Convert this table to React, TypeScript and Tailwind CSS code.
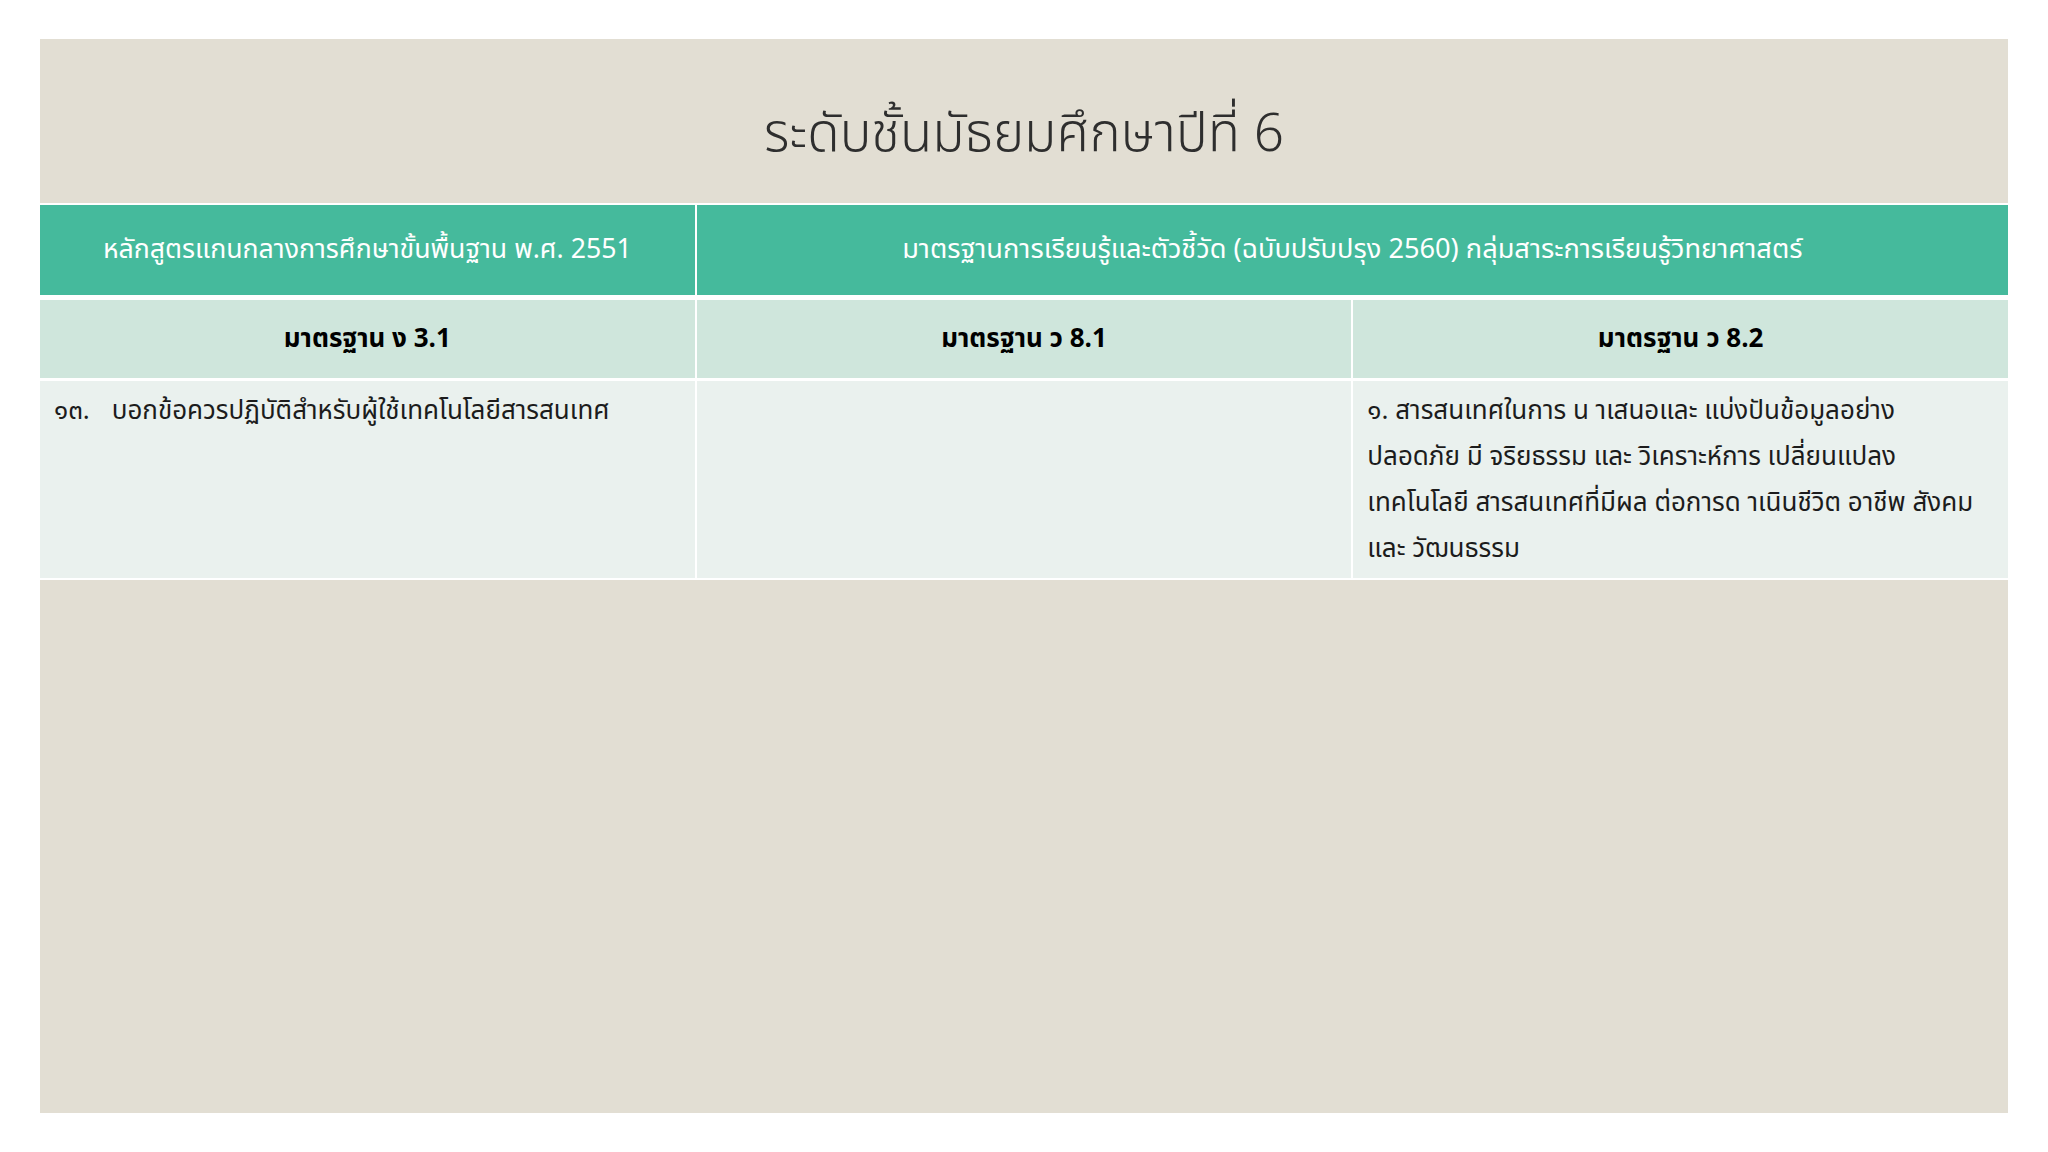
const thai = { fontFamily: '"Noto Sans Thai", "Noto Sans", Loma, Garuda, "DejaVu Sans", sans-serif' };

const App = () => {
  const subHeads = ['มาตรฐาน ง 3.1', 'มาตรฐาน ว 8.1', 'มาตรฐาน ว 8.2'];
  const lines = [
    '๑. สารสนเทศในการ น าเสนอและ แบ่งปันข้อมูลอย่าง',
    'ปลอดภัย มี จริยธรรม และ วิเคราะห์การ เปลี่ยนแปลง',
    'เทคโนโลยี สารสนเทศที่มีผล ต่อการด าเนินชีวิต อาชีพ สังคม',
    'และ วัฒนธรรม',
  ];

  return (
    <div className="min-h-screen bg-white pt-[39px] pl-[40px]" style={thai}>
      <div className="w-[1968px] h-[1074px] bg-[#e2ded3] flex flex-col">
        <h1 className="h-[164px] pt-[30px] flex items-center justify-center text-[53px] font-light text-[#2e2e2e]">
          ระดับชั้นมัธยมศึกษาปีที่ 6
        </h1>

        <div className="flex flex-col bg-white py-[2px]">
          <div className="grid grid-cols-3 gap-x-[2px] h-[90px]">
            <div className="bg-[#45ba9c] flex items-center justify-center text-white text-[26.7px]">
              หลักสูตรแกนกลางการศึกษาขั้นพื้นฐาน พ.ศ. 2551
            </div>
            <div className="col-span-2 bg-[#45ba9c] flex items-center justify-center text-white text-[27.2px]">
              มาตรฐานการเรียนรู้และตัวชี้วัด (ฉบับปรับปรุง 2560) กลุ่มสาระการเรียนรู้วิทยาศาสตร์
            </div>
          </div>

          <div className="grid grid-cols-3 gap-x-[2px] h-[78px] mt-[5px]">
            {subHeads.map((h) => (
              <div key={h} className="bg-[#cfe6dc] flex items-center justify-center text-black text-[26px] font-bold">
                {h}
              </div>
            ))}
          </div>

          <div className="grid grid-cols-3 gap-x-[2px] h-[197px] mt-[3px]">
            <div className="bg-[#eaf1ee] px-[14px] pt-[7px] text-[26px] leading-[46px] text-[#1c1c1c]">
              ๑๓.<span className="inline-block w-[22px]" />บอกข้อควรปฏิบัติสำหรับผู้ใช้เทคโนโลยีสารสนเทศ
            </div>
            <div className="bg-[#eaf1ee]" />
            <div className="bg-[#eaf1ee] px-[14px] pt-[7px] text-[26px] leading-[46px] text-[#1c1c1c]">
              {lines.map((l) => (
                <div key={l} className="whitespace-nowrap">{l}</div>
              ))}
            </div>
          </div>
        </div>
      </div>
    </div>
  );
};

export default App;
